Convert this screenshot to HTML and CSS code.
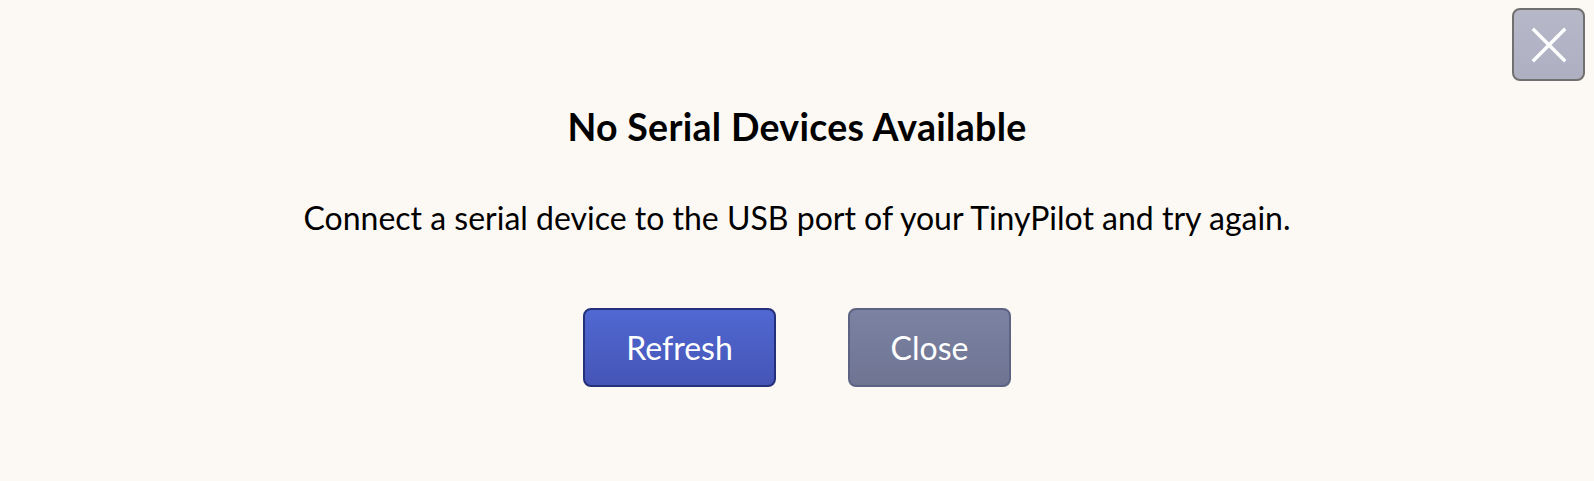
FILE: index.html
```html
<!DOCTYPE html>
<html>
<head>
<meta charset="utf-8">
<link rel="stylesheet" href="styles.css">
</head>
<body>
<div class="page">
  <button class="dismiss" aria-label="Close">
    <svg viewBox="0 0 40 40" width="40" height="40"><path d="M5 5 L35 35 M35 5 L5 35" stroke="#fff" stroke-width="3.4" stroke-linecap="square" fill="none"/></svg>
  </button>
  <div class="dialog">
    <h1 class="title">No Serial Devices Available</h1>
    <p class="message">Connect a serial device to the USB port of your TinyPilot and try again.</p>
    <div class="actions">
      <button class="btn btn-primary">Refresh</button>
      <button class="btn btn-secondary">Close</button>
    </div>
  </div>
</div>
</body>
</html>
```
FILE: styles.css
```css
html, body {
  margin: 0;
  padding: 0;
  background: #fcf9f4;
}
body {
  font-family: "Lato", "Noto Sans", sans-serif;
  color: #000;
}
.page {
  position: relative;
  width: 1594px;
  height: 481px;
}
.dismiss {
  position: absolute;
  top: 8px;
  left: 1512px;
  width: 73px;
  height: 73px;
  box-sizing: border-box;
  border: 2px solid #707070;
  border-radius: 8px;
  background: linear-gradient(#b6b8c8, #aeb0c2);
  display: flex;
  align-items: center;
  justify-content: center;
  padding: 0;
}
.dismiss svg { display: block; }
.dialog {
  display: flex;
  flex-direction: column;
  align-items: center;
  padding-top: 105px;
}
.title {
  margin: 0;
  font-size: 37.5px;
  font-weight: 700;
  line-height: 44px;
  letter-spacing: 0.3px;
}
.message {
  margin: 49px 0 0;
  font-size: 32px;
  line-height: 40px;
}
.actions {
  display: flex;
  gap: 72px;
  margin-top: 70px;
}
.btn {
  box-sizing: border-box;
  height: 79px;
  border-radius: 8px;
  font-family: inherit;
  font-size: 32px;
  color: #fff;
  padding: 0;
}
.btn-primary {
  width: 193px;
  background: linear-gradient(#5068d2, #4555b6);
  border: 2px solid #25307a;
}
.btn-secondary {
  width: 163px;
  background: linear-gradient(#7c83a2, #6e7492);
  border: 2px solid #5d6383;
}
```
